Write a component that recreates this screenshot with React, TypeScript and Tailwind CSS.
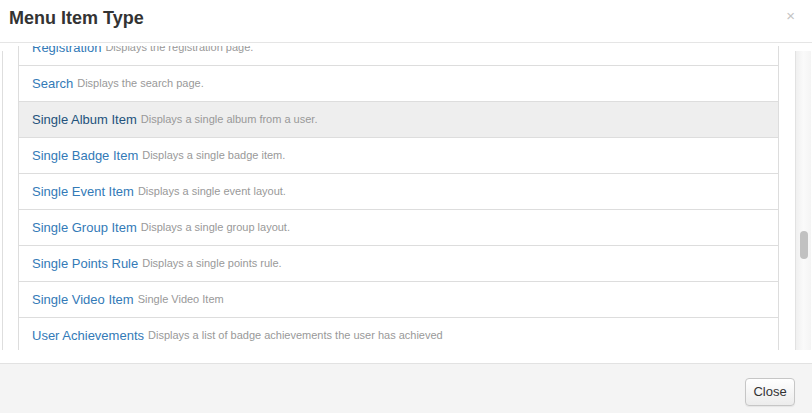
import React from "react";

type Item = { name: string; desc: string; active?: boolean };

const items: Item[] = [
  { name: "Registration", desc: "Displays the registration page." },
  { name: "Search", desc: "Displays the search page." },
  { name: "Single Album Item", desc: "Displays a single album from a user.", active: true },
  { name: "Single Badge Item", desc: "Displays a single badge item." },
  { name: "Single Event Item", desc: "Displays a single event layout." },
  { name: "Single Group Item", desc: "Displays a single group layout." },
  { name: "Single Points Rule", desc: "Displays a single points rule." },
  { name: "Single Video Item", desc: "Single Video Item" },
  { name: "User Achievements", desc: "Displays a list of badge achievements the user has achieved" },
];

export default function App() {
  return (
    <div
      className="w-[812px] h-[413px] bg-white flex flex-col overflow-hidden text-[#333]"
      style={{ fontFamily: '"Liberation Sans", Arial, sans-serif' }}
    >
      {/* header */}
      <div className="h-[43px] flex items-center justify-between pl-[9px] pr-[17px] border-b border-[#e5e5e5] shrink-0">
        <h3 className="text-[18px] font-bold leading-none text-[#333] -mt-[6px]">Menu Item Type</h3>
        <span className="text-[15px] leading-none text-[#c4c4c4] -mt-[11px]">×</span>
      </div>

      {/* body */}
      <div className="h-[320px] shrink-0 flex flex-col">
        <div className="h-[307px] flex">
          <div className="w-px ml-[2px] mt-[8px] bg-[#dedede]" />
          <div className="ml-[15px] mt-[3px] w-[761px] overflow-hidden">
            <ul className="-mt-[16px] border-l border-r border-[#dddddd]">
              {items.map((it) => (
                <li
                  key={it.name}
                  className={`h-[36px] flex items-center pl-[13px] border-b border-[#dddddd] ${
                    it.active ? "bg-[#eeeeee]" : "bg-white"
                  }`}
                >
                  <span className={`text-[13px] ${it.active ? "text-[#23527c]" : "text-[#337ab7]"}`}>
                    {it.name}
                  </span>
                  <span className="text-[11px] text-[#999999] ml-[4px]">{it.desc}</span>
                </li>
              ))}
            </ul>
          </div>
          {/* scrollbar */}
          <div className="ml-[16px] mt-[8px] w-[16px] border-l border-[#e2e2e2] bg-gradient-to-r from-[#f0f0f0] via-[#fafafa] to-[#f4f4f4] relative">
            <div className="absolute left-[4px] top-[180px] w-[8px] h-[28px] rounded-full bg-[#c1c1c1]" />
          </div>
        </div>
      </div>

      {/* footer */}
      <div className="flex-1 bg-[#f4f4f4] border-t border-[#e2e2e2] flex items-start justify-end pr-[17px] pt-[14px]">
        <button className="h-[28px] w-[50px] rounded-[4px] border border-[#c6c6c6] bg-gradient-to-b from-white to-[#ececec] text-[13px] text-[#333] shadow-[0_1px_1px_rgba(0,0,0,0.06)]">
          Close
        </button>
      </div>
    </div>
  );
}
